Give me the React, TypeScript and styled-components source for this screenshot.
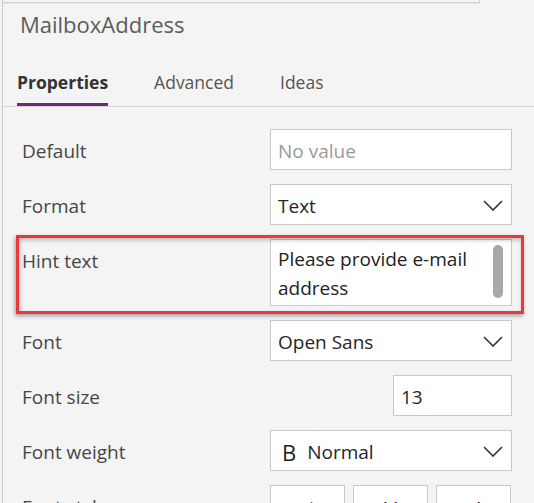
import React from "react";
import styled, { createGlobalStyle, css } from "styled-components";

const Global = createGlobalStyle`
  html, body { margin: 0; padding: 0; background: #f4f4f4; }
  body { font-family: "Open Sans", "Noto Sans", sans-serif; }
  * { box-sizing: border-box; }
`;

const Frame = styled.div`
  width: 534px;
  height: 503px;
  overflow: hidden;
  background: #f4f4f4;
  padding-left: 2px;
`;

const Panel = styled.div`
  height: 100%;
  border-left: 1px solid #cdcdcd;
`;

const TopStub = styled.div`
  width: 477px;
  height: 3px;
  border-bottom: 1px solid #cfcfcf;
  border-right: 1px solid #cfcfcf;
  box-shadow: 0 1px 1px rgba(0, 0, 0, 0.06);
`;

const Title = styled.div`
  margin-top: 6px;
  padding-left: 17px;
  font-size: 22px;
  line-height: 30px;
  color: #5c5c5c;
`;

const TabBar = styled.div`
  margin-top: 31px;
  display: flex;
  gap: 46px;
  padding-left: 14px;
  border-bottom: 1px solid #d6d6d6;
`;

const Tab = styled.div<{ $active?: boolean }>`
  font-size: 17.5px;
  line-height: 24px;
  padding-bottom: 9px;
  border-bottom: 3px solid transparent;
  color: #555;
  ${(p) =>
    p.$active &&
    css`
      font-weight: 700;
      color: #333;
      border-bottom-color: #742774;
    `}
`;

const Rows = styled.div`
  display: flex;
  flex-direction: column;
  gap: 14px;
  padding-top: 22px;
`;

const Row = styled.div<{ $highlight?: boolean }>`
  position: relative;
  display: grid;
  grid-template-columns: 248px 242px;
  padding-left: 19px;
  ${(p) =>
    p.$highlight &&
    css`
      &::after {
        content: "";
        position: absolute;
        left: 13px;
        width: 502px;
        top: -4px;
        bottom: -8px;
        border: 3px solid #e8393f;
        box-shadow: -1px 2px 4px rgba(0, 0, 0, 0.35),
          inset 1px 2px 4px rgba(0, 0, 0, 0.25);
        pointer-events: none;
      }
    `}
`;

const Label = styled.div<{ $top?: boolean }>`
  font-size: 19px;
  color: #464646;
  line-height: ${(p) => (p.$top ? "29px" : "37px")};
  padding-top: ${(p) => (p.$top ? "8px" : "4px")};
  white-space: nowrap;
`;

const Field = styled.div<{ $narrow?: boolean; $placeholder?: boolean }>`
  height: 41px;
  width: ${(p) => (p.$narrow ? "119px" : "242px")};
  justify-self: end;
  background: #fff;
  border: 1px solid #c9c9c9;
  display: flex;
  align-items: center;
  padding: 2px 8px 0 7px;
  font-size: 19px;
  color: ${(p) => (p.$placeholder ? "#9a9a9a" : "#262626")};
`;

const FieldText = styled.span`
  flex: 1;
  white-space: nowrap;
`;

const Chevron = () => (
  <svg width="20" height="11" viewBox="0 0 20 11">
    <polyline points="1,1 10,10 19,1" fill="none" stroke="#333" strokeWidth="1.6" />
  </svg>
);

const TextArea = styled.div`
  height: 67px;
  width: 242px;
  background: #fff;
  border: 1px solid #c9c9c9;
  display: flex;
  padding: 5px 8px 6px 7px;
  gap: 4px;
`;

const AreaText = styled.div`
  flex: 1;
  font-size: 19px;
  line-height: 29px;
  color: #222;
  overflow: hidden;
`;

const Thumb = styled.div`
  width: 10px;
  height: 53px;
  border-radius: 5px;
  background: #a8a8a8;
`;

const BoldMark = styled.span`
  font-size: 22px;
  color: #222;
  margin: 0 11px 0 4px;
`;

const StyleButtons = styled.div`
  display: flex;
  gap: 8px;
`;

const StyleButton = styled.div`
  width: 75px;
  height: 41px;
  background: #fff;
  border: 1px solid #c9c9c9;
  display: flex;
  justify-content: center;
  padding-top: 8px;
  font-size: 22px;
  line-height: 30px;
  color: #333;
`;

const Italic = styled.span`
  font-style: italic;
  font-family: "Liberation Serif", serif;
`;
const Under = styled.span`
  text-decoration: underline;
`;
const Strike = styled.span`
  text-decoration: line-through;
  padding-left: 6px;
`;

export default function App() {
  return (
    <>
      <Global />
      <Frame>
        <Panel>
          <TopStub />
          <Title>MailboxAddress</Title>
          <TabBar>
            <Tab $active>Properties</Tab>
            <Tab>Advanced</Tab>
            <Tab>Ideas</Tab>
          </TabBar>
          <Rows>
            <Row>
              <Label>Default</Label>
              <Field $placeholder>
                <FieldText>No value</FieldText>
              </Field>
            </Row>
            <Row>
              <Label>Format</Label>
              <Field>
                <FieldText>Text</FieldText>
                <Chevron />
              </Field>
            </Row>
            <Row $highlight>
              <Label $top>Hint text</Label>
              <TextArea>
                <AreaText>Please provide e-mail address</AreaText>
                <Thumb />
              </TextArea>
            </Row>
            <Row>
              <Label>Font</Label>
              <Field>
                <FieldText>Open Sans</FieldText>
                <Chevron />
              </Field>
            </Row>
            <Row>
              <Label>Font size</Label>
              <Field $narrow>
                <FieldText>13</FieldText>
              </Field>
            </Row>
            <Row>
              <Label>Font weight</Label>
              <Field>
                <BoldMark>B</BoldMark>
                <FieldText>Normal</FieldText>
                <Chevron />
              </Field>
            </Row>
            <Row>
              <Label>Font style</Label>
              <StyleButtons>
                <StyleButton>
                  <Italic>/</Italic>
                </StyleButton>
                <StyleButton>
                  <Under>U</Under>
                </StyleButton>
                <StyleButton>
                  <Strike>ab</Strike>
                </StyleButton>
              </StyleButtons>
            </Row>
          </Rows>
        </Panel>
      </Frame>
    </>
  );
}
